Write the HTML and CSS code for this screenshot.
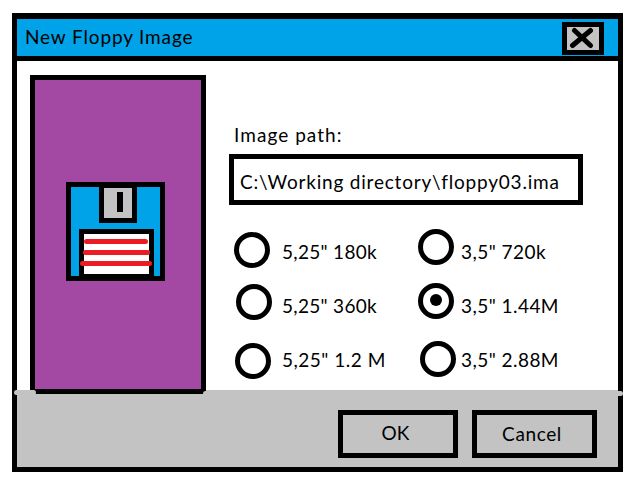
FILE: index.html
```html
<!DOCTYPE html>
<html lang="en">
<head>
<meta charset="utf-8">
<title>New Floppy Image</title>
<link rel="stylesheet" href="styles.css">
</head>
<body>
<section class="window">
  <header class="titlebar">
    <h1 class="title"><span>New Floppy Image</span></h1>
    <button class="close" aria-label="Close">
      <svg width="32" height="23" viewBox="0 0 32 23"><path d="M7.5 3.5 23.500 18.500M23.500 3.500 5.500 18.500"/></svg>
    </button>
  </header>
  <main class="content">
    <aside class="panel">
      <svg width="99" height="99" viewBox="0 0 99 99" shape-rendering="crispEdges">
        <path d="M0 0H99V99H0Z"/>
        <path class="blue" d="M5 5H94V94H5Z"/>
        <path d="M33 0H71V41H33ZM13 47H88V99H13Z"/>
        <path class="gray" d="M38 6H66V36H38Z"/>
        <path d="M51 10H57V30H51Z"/>
        <path class="white" d="M18 52H83V92H18Z"/>
        <path class="red" shape-rendering="auto" d="M20.5 59.5H79.500M19.500 70.500H81.500M16.500 81.500H83.500"/>
      </svg>
    </aside>
    <form class="form">
      <label class="path-label" for="path"><span>Image path:</span></label>
      <div class="path" id="path"><span>C:\Working directory\floppy03.ima</span></div>
      <div class="options">
        <div class="column left">
          <div class="option"><i class="radio"></i><span class="text">5,25" 180k</span></div>
          <div class="option second"><i class="radio"></i><span class="text">5,25" 360k</span></div>
          <div class="option third"><i class="radio"></i><span class="text mega">5,25" 1.2 M</span></div>
        </div>
        <div class="column right">
          <div class="option"><i class="radio"></i><span class="text">3,5" 720k</span></div>
          <div class="option second"><i class="radio checked"></i><span class="text">3,5" 1.44M</span></div>
          <div class="option third"><i class="radio"></i><span class="text">3,5" 2.88M</span></div>
        </div>
      </div>
    </form>
  </main>
  <footer class="footer">
    <button class="button ok"><span>OK</span></button>
    <button class="button cancel"><span>Cancel</span></button>
  </footer>
  <svg class="seams" width="611" height="8" viewBox="0 0 611 8"><path d="M4.500 3.500H21.500M193.500 4.500H608.500"/></svg>
</section>
</body>
</html>
```
FILE: styles.css
```css
* { box-sizing: border-box; }
body {
  margin: 0;
  padding: 13px 0 0 12px;
  background: #fff;
  color: #000;
  font: 19px/24px Lato, "Open Sans", sans-serif;
  white-space: nowrap;
}
.window {
  position: relative;
  display: flex;
  flex-direction: column;
  width: 611px;
  height: 459px;
  border: 5px solid #000;
  border-top-width: 6px;
}
.titlebar {
  display: flex;
  justify-content: space-between;
  height: 42px;
  flex: none;
  padding: 3px 14px 0 8px;
  background: #00a2e8;
  border-bottom: 5px solid #000;
}
.title { margin: 3px 0 0; font-size: 19px; font-weight: 400; letter-spacing: .86px; line-height: 24px; }
.close {
  display: block;
  width: 42px;
  height: 33px;
  padding: 0;
  border: 5px solid #000;
  background: #c3c3c3;
}
.close svg { display: block; }
.close path { fill: none; stroke: #000; stroke-width: 5; stroke-linecap: round; }
.content { display: flex; height: 329px; flex: none; padding: 14px 0 0 13px; }
.panel {
  position: relative;
  z-index: 1;
  width: 176px;
  height: 319px;
  padding: 102px 0 0 31px;
  border: 5px solid #000;
  background: #a349a4;
}
.panel svg { display: block; }
.blue { fill: #00a2e8; }
.gray { fill: #c3c3c3; }
.white { fill: #fff; }
.red { fill: none; stroke: #ed1c24; stroke-width: 5; stroke-linecap: round; }
.form { margin-left: 23px; padding-top: 48px; }
.path-label { display: block; height: 31px; padding-left: 5px; letter-spacing: 1.05px; }
.path { width: 354px; height: 51px; padding: 11px 6px; border: 5px solid #000; letter-spacing: .8px; }
.options { display: flex; }
.column { display: flex; flex-direction: column; }
.left { width: 189px; padding: 27px 0 0 5px; }
.right { padding-top: 24px; }
.option { display: flex; height: 36px; }
.left .second { margin: 16px 0 0 2px; }
.left .third { margin: 23px 0 0 1px; }
.right .second { margin-top: 18px; }
.right .third { margin: 22px 0 0 2px; }
.radio {
  display: flex;
  align-items: center;
  justify-content: center;
  width: 36px;
  height: 36px;
  border: 5px solid #000;
  border-radius: 50%;
}
.checked::before { content: ""; width: 12px; height: 12px; margin-top: -2px; border-radius: 50%; background: #000; }
.text { margin: 8px 0 0 12px; letter-spacing: .3px; }
.left .second .text { margin: 10px 0 0 10px; }
.left .third .text { margin: 5px 0 0 11px; letter-spacing: .5px; }
.right .text { margin: 11px 0 0 7px; letter-spacing: .45px; }
.right .third .text { margin: 7px 0 0 5px; }
.footer {
  display: flex;
  flex: 1;
  gap: 14px;
  padding: 20px 0 0 321px;
  background: #c3c3c3;
}
.button {
  height: 48px;
  padding: 0;
  border: 5px solid #000;
  background: #c3c3c3;
  color: #000;
  font: 19px/24px Lato, "Open Sans", sans-serif;
}
.ok { width: 120px; padding: 0 5px 2px 0; }
.cancel { width: 125px; padding-right: 5px; letter-spacing: .6px; }
.seams { position: absolute; left: -5px; top: 370px; z-index: 2; }
.seams path { fill: none; stroke: #c3c3c3; stroke-width: 5; stroke-linecap: round; }
```
